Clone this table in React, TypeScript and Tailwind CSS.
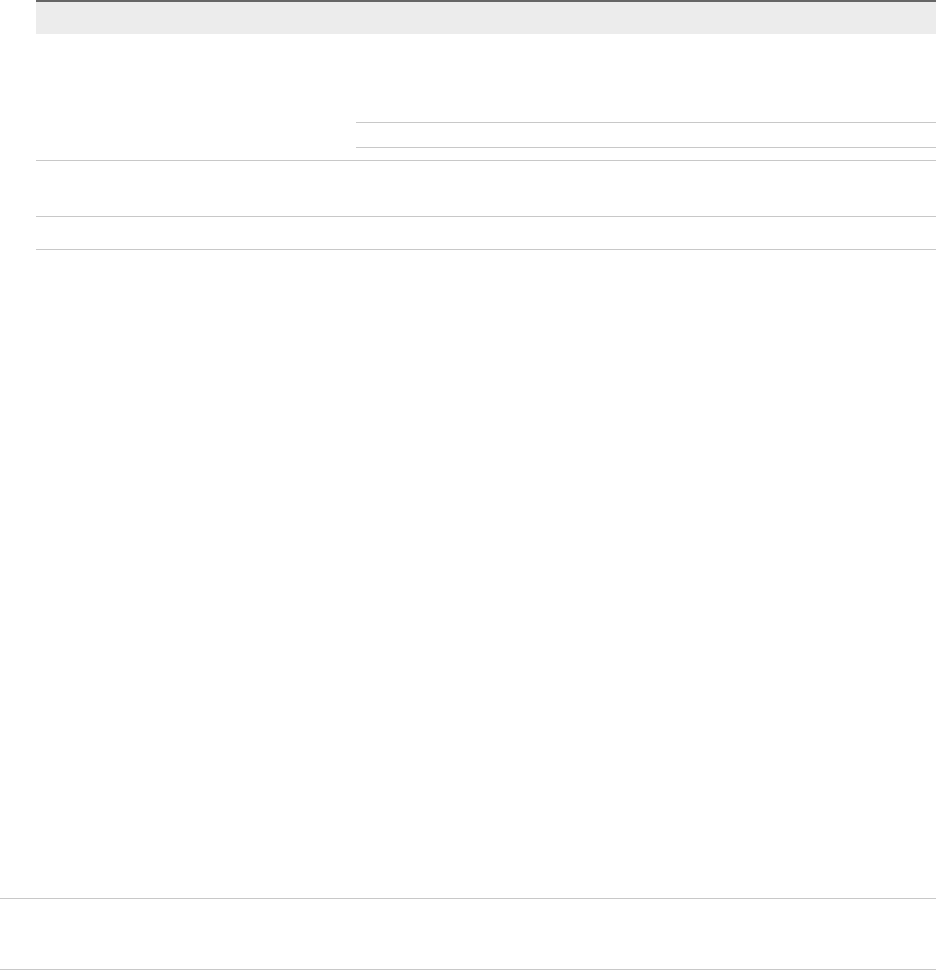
import React from "react";

export default function App() {
  return (
    <div className="w-[936px] h-[970px] bg-white flex flex-col overflow-hidden" style={{ fontFamily: '"Liberation Sans", Arial, sans-serif' }}>
      <div className="pl-[36px] flex flex-col">
        <div className="h-[34px] border-t-2 border-[#666666] bg-[#ececec]" />
        <div className="flex h-[127px] border-b border-[#c8c8c8]">
          <div className="w-[320px]" />
          <div className="flex-1 flex flex-col">
            <div className="h-[89px] border-b border-[#c8c8c8]" />
            <div className="h-[25px] border-b border-[#c8c8c8]" />
          </div>
        </div>
        <div className="h-[56px] border-b border-[#c8c8c8]" />
        <div className="h-[33px] border-b border-[#c8c8c8]" />
      </div>
      <div className="h-[648px]" />
      <div className="h-[72px] border-t border-b border-[#c8c8c8]" />
    </div>
  );
}
